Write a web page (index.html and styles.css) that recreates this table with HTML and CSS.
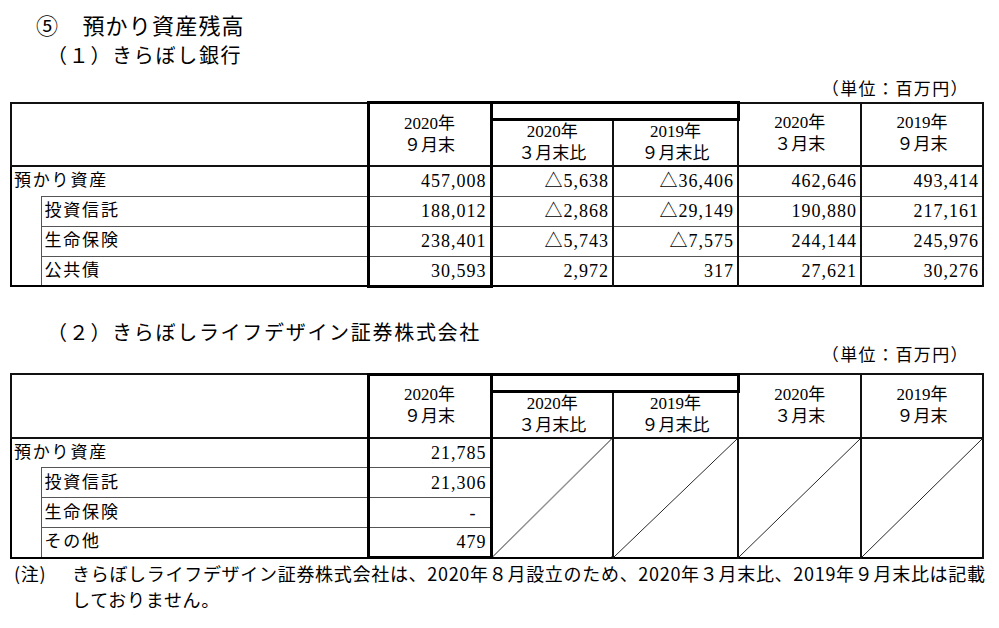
FILE: index.html
```html
<!DOCTYPE html>
<html lang="ja">
<head>
<meta charset="utf-8">
<title>預かり資産残高</title>
<link rel="stylesheet" href="styles.css">
</head>
<body>
<div class="page">
  <h1 class="title">⑤　預かり資産残高</h1>
  <h2 class="subtitle">（１）きらぼし銀行</h2>
  <div class="unit">（単位：百万円）</div>
  <table class="bal">
    <colgroup>
      <col class="c-ind"><col class="c-lab"><col class="c-v1"><col class="c-v2"><col class="c-v3"><col class="c-v4"><col class="c-v5">
    </colgroup>
    <thead>
      <tr class="ha">
        <th colspan="2" rowspan="2"></th>
        <th rowspan="2" class="g g-top">2020年<br>９月末</th>
        <th colspan="2" class="g-empty"></th>
        <th rowspan="2">2020年<br>３月末</th>
        <th rowspan="2">2019年<br>９月末</th>
      </tr>
      <tr class="hb">
        <th class="gc">2020年<br>３月末比</th>
        <th>2019年<br>９月末比</th>
      </tr>
    </thead>
    <tbody>
      <tr>
        <td colspan="2" class="lab top">預かり資産</td>
        <td class="num g">457,008</td>
        <td class="num gc">△5,638</td>
        <td class="num">△36,406</td>
        <td class="num">462,646</td>
        <td class="num">493,414</td>
      </tr>
      <tr>
        <td rowspan="3" class="ind"></td>
        <td class="lab sub">投資信託</td>
        <td class="num g">188,012</td>
        <td class="num gc">△2,868</td>
        <td class="num">△29,149</td>
        <td class="num">190,880</td>
        <td class="num">217,161</td>
      </tr>
      <tr>
        <td class="lab sub">生命保険</td>
        <td class="num g">238,401</td>
        <td class="num gc">△5,743</td>
        <td class="num">△7,575</td>
        <td class="num">244,144</td>
        <td class="num">245,976</td>
      </tr>
      <tr>
        <td class="lab sub">公共債</td>
        <td class="num g g-bot">30,593</td>
        <td class="num gc">2,972</td>
        <td class="num">317</td>
        <td class="num">27,621</td>
        <td class="num">30,276</td>
      </tr>
    </tbody>
  </table>

  <h2 class="subtitle subtitle-2">（２）きらぼしライフデザイン証券株式会社</h2>
  <div class="unit unit-2">（単位：百万円）</div>
  <table class="bal bal-2">
    <colgroup>
      <col class="c-ind"><col class="c-lab"><col class="c-v1"><col class="c-v2"><col class="c-v3"><col class="c-v4"><col class="c-v5">
    </colgroup>
    <thead>
      <tr class="ha">
        <th colspan="2" rowspan="2"></th>
        <th rowspan="2" class="g g-top">2020年<br>９月末</th>
        <th colspan="2" class="g-empty"></th>
        <th rowspan="2">2020年<br>３月末</th>
        <th rowspan="2">2019年<br>９月末</th>
      </tr>
      <tr class="hb">
        <th class="gc">2020年<br>３月末比</th>
        <th>2019年<br>９月末比</th>
      </tr>
    </thead>
    <tbody>
      <tr>
        <td colspan="2" class="lab top">預かり資産</td>
        <td class="num g">21,785</td>
        <td rowspan="4" class="diag gc"></td>
        <td rowspan="4" class="diag"></td>
        <td rowspan="4" class="diag"></td>
        <td rowspan="4" class="diag"></td>
      </tr>
      <tr>
        <td rowspan="3" class="ind"></td>
        <td class="lab sub">投資信託</td>
        <td class="num g">21,306</td>
      </tr>
      <tr>
        <td class="lab sub">生命保険</td>
        <td class="num g dash">-</td>
      </tr>
      <tr>
        <td class="lab sub">その他</td>
        <td class="num g g-bot">479</td>
      </tr>
    </tbody>
  </table>

  <div class="note">
    <div class="note-label">(注)</div>
    <div class="note-text">きらぼしライフデザイン証券株式会社は、2020年８月設立のため、2020年３月末比、2019年９月末比は記載<br>しておりません。</div>
  </div>
</div>
</body>
</html>
```

FILE: styles.css
```css
* { box-sizing: border-box; }

body {
  margin: 0;
  background: #fff;
  color: #000;
}

.page {
  width: 999px;
  padding-top: 9px;
}

.title {
  margin: 0 0 0 36px;
  font: 400 22px/30px "Noto Sans CJK JP", sans-serif;
  letter-spacing: 1.2px;
}

.subtitle {
  margin: 0 0 0 47px;
  font: 400 20px/31px "Noto Sans CJK JP", sans-serif;
  letter-spacing: 1.7px;
}

.subtitle-2 {
  margin-top: 32px;
  line-height: 24px;
}

.unit {
  margin-top: 8px;
  padding-right: 30px;
  text-align: right;
  font: 400 17px/20px "Noto Sans CJK JP", sans-serif;
  letter-spacing: 1.4px;
}

.unit-2 { margin-top: 0; }

.bal {
  margin: 3px 0 0 10px;
  width: 972px;
  table-layout: fixed;
  border-collapse: collapse;
  border: 2px solid #000;
  font-family: "Liberation Serif", "Noto Sans CJK JP", serif;
  font-size: 17px;
  color: #000;
}

.bal-2 { margin-top: 9px; }

.c-ind { width: 30px; }
.c-lab { width: 327px; }
.c-v1 { width: 123px; }
.c-v2 { width: 122px; }
.c-v3 { width: 125px; }
.c-v4 { width: 123px; }
.c-v5 { width: 122px; }

.bal th {
  font-weight: normal;
  border: 2px solid #111;
  text-align: center;
  vertical-align: middle;
  line-height: 22px;
  padding: 0;
}

.bal .ha { height: 17px; }
.bal .hb { height: 46px; }

.bal td {
  height: 30px;
  padding: 0 3px;
  line-height: 22px;
  border-top: 1px solid #555;
  border-bottom: 1px solid #555;
  border-left: 2px solid #111;
  border-right: 2px solid #111;
  vertical-align: middle;
}

.bal .g {
  border-left: 3px solid #000;
  border-right: 3px solid #000;
}

.bal .gc { border-left: 3px solid #000; }
.bal .g-top { border-top: 3px solid #000; }
.bal .g-empty { border: 3px solid #000; }
.bal .g-bot { border-bottom: 3px solid #000; }

.bal .num {
  text-align: right;
  font-size: 18px;
  letter-spacing: 1px;
}

.bal .dash { padding-right: 13px; }

.bal .lab {
  text-align: left;
  padding-left: 2px;
  letter-spacing: 1.8px;
  border-left: 2px solid #000;
}

.bal .lab.top { border-bottom: none; }

.bal .lab.sub {
  padding-left: 3px;
  border-left: 1px solid #555;
}

.bal .ind {
  border-top: none;
  border-left: 2px solid #000;
  border-right: 1px solid #555;
  border-bottom: 2px solid #000;
}

.bal .diag {
  background: linear-gradient(to bottom right,
    transparent calc(50% - 0.7px),
    #222 50%,
    transparent calc(50% + 0.7px));
}

.note {
  display: flex;
  margin: 1px 0 0 14px;
  font: 400 18px/26px "Noto Sans CJK JP", sans-serif;
  letter-spacing: 0.7px;
}

.note-label {
  flex: none;
  width: 58px;
}
```
